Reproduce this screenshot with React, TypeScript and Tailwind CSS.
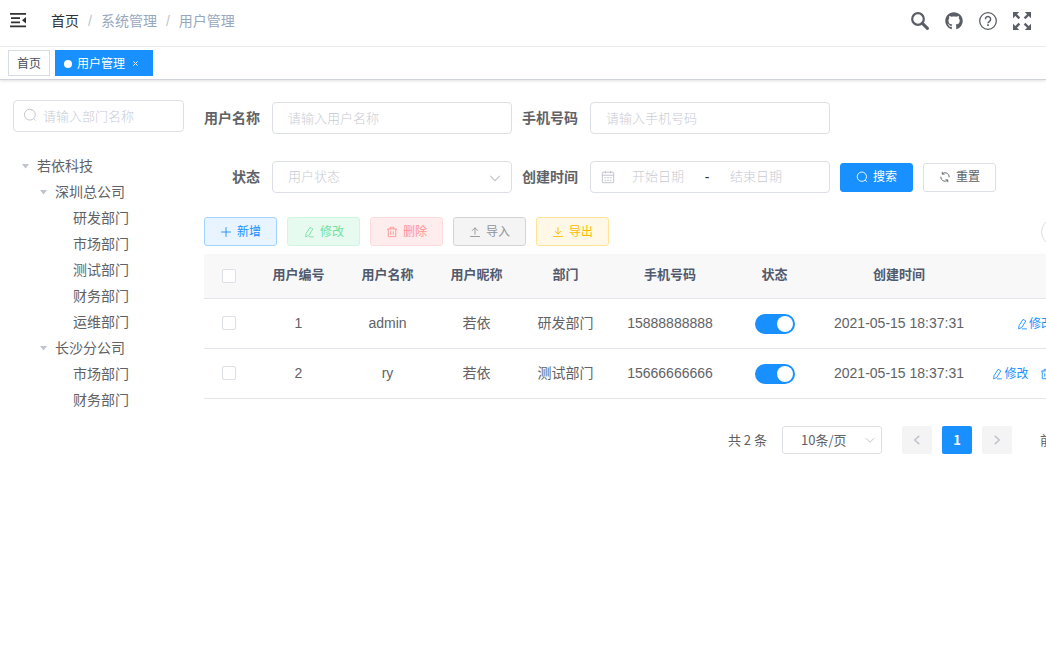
import type { ReactNode } from "react";
import { FaGithub } from "react-icons/fa";

type IconName =
  | "search" | "plus" | "edit" | "delete" | "upload" | "download"
  | "refresh" | "date" | "down" | "left" | "right";

const shapes: Record<IconName, ReactNode> = {
  search: <><circle cx="7.8" cy="7.6" r="6.2" /><path d="M12.2 12l2.2 2.4" /></>,
  plus: <path d="M8 1.5v13M1.5 8h13" />,
  edit: <><path d="M9.5 1.8l3.6 2.1-5.4 8.8-4.2 1.7.6-4.3z" /><path d="M8 14.5h6.5" /></>,
  delete: <><path d="M1.5 4h13M5.5 4V1.8h5V4M3 4v10.2h10V4M6.3 7v4.5M9.7 7v4.5" /></>,
  upload: <path d="M8 11.5V2.4M4 6.4l4-4 4 4M1.5 14h13" />,
  download: <path d="M8 1.5v9.3M4 6.8l4 4 4-4M1.5 14h13" />,
  refresh: <><path d="M2.4 7.6a5.7 5.7 0 0 0 9.2 4.9M13.6 8.4a5.7 5.7 0 0 0-9.2-4.9" /><path d="M4.3 1v3.2h3.2M11.7 15v-3.2H8.5" /></>,
  date: <><rect x="1.5" y="2.5" width="13" height="12" rx="0.8" /><path d="M1.5 6h13M5 1v3M11 1v3M4 8.8h2M7 8.8h2M10 8.8h2M4 11.8h2M7 11.8h2M10 11.8h2" /></>,
  down: <path d="M2.5 5.5L8 11l5.5-5.5" />,
  left: <path d="M11 2.5L5 8l6 5.5" />,
  right: <path d="M5 2.5L11 8l-6 5.5" />,
};

function Icon({ name, className = "size-3", width = 1.2 }: { name: IconName; className?: string; width?: number }) {
  return (
    <svg viewBox="0 0 16 16" fill="none" stroke="currentColor" strokeWidth={width} className={`shrink-0 ${className}`} aria-hidden="true">
      {shapes[name]}
    </svg>
  );
}

const field =
  "h-8 w-full rounded border border-[#dcdfe6] bg-white text-[13px] text-[#606266] outline-none placeholder:text-[#c8ccd4] placeholder:font-light";
const button = "flex h-[29px] w-[73px] items-center justify-center gap-[5px] rounded-[3px] border text-xs";

function FormItem({ label, id, children }: { label: string; id: string; children: ReactNode }) {
  return (
    <div className="flex items-center">
      <label htmlFor={id} className="w-[68px] pr-3 text-right text-sm font-bold whitespace-nowrap text-[#606266]">
        {label}
      </label>
      <div className="relative w-60">{children}</div>
    </div>
  );
}

function Header() {
  return (
    <header className="flex h-[47px] items-center justify-between border-b border-[#eef0f3] pr-[15px] pb-1 pl-[9px]">
      <div className="flex items-center gap-6">
        <button type="button" aria-label="折叠菜单" className="size-[18px] text-[#303133]">
          <svg viewBox="0 0 18 18" fill="currentColor" className="size-[18px]">
            <path d="M1 1h16v1.8H1zM2 5.2h9v1.8H2zM2 9.4h9v1.8H2zM1 13.4h16v1.8H1zM17 5v6.4L13 8.2z" />
          </svg>
        </button>
        <nav className="flex items-center gap-[9px] text-sm text-[#97a8be]">
          <a href="#" className="text-[#303133]">首页</a>
          <span className="text-[#c0c4cc]">/</span>
          <span>系统管理</span>
          <span className="text-[#c0c4cc]">/</span>
          <span>用户管理</span>
        </nav>
      </div>
      <div className="flex items-center gap-4 text-[#5a5e66]">
        <button type="button" aria-label="搜索">
          <svg viewBox="0 0 18 18" fill="none" stroke="currentColor" className="size-[18px]">
            <circle cx="7" cy="7" r="5.8" strokeWidth="2.2" />
            <path d="M11.4 11.4l5 5" strokeWidth="3" strokeLinecap="round" />
          </svg>
        </button>
        <a href="#" aria-label="源码"><FaGithub className="size-[18px]" /></a>
        <a href="#" aria-label="文档">
          <svg viewBox="0 0 18 18" fill="none" stroke="currentColor" className="size-[18px]">
            <circle cx="9" cy="9" r="8.3" strokeWidth="1.3" />
            <path d="M6.4 7.2a2.6 2.6 0 1 1 4.1 2.1c-.9.6-1.5 1-1.5 2" strokeWidth="1.5" />
            <path d="M9 12.3v1.6" strokeWidth="1.7" />
          </svg>
        </a>
        <button type="button" aria-label="全屏">
          <svg viewBox="0 0 18 18" fill="currentColor" stroke="currentColor" className="size-[18px]">
            <g strokeWidth="0">
              <path d="M0 0h6.2L0 6.2zM18 0v6.2L11.8 0zM0 18v-6.2L6.2 18zM18 18h-6.2l6.2-6.2z" />
            </g>
            <path d="M2 2l4.4 4.4M16 2l-4.4 4.4M2 16l4.4-4.4M16 16l-4.4-4.4" strokeWidth="2.4" />
          </svg>
        </button>
      </div>
    </header>
  );
}

function TagsBar() {
  return (
    <div className="flex h-[33px] items-start gap-[5px] border-b border-[#d0d3da] px-2 pt-[3px] text-xs shadow-[0_1px_3px_0_rgba(0,0,0,0.12)]">
      <a href="#" className="flex h-[26px] items-center border border-[#d8dce5] px-2 pt-px text-[#495060]">首页</a>
      <a href="#" className="flex h-[26px] w-[98px] items-center border border-[#1890ff] bg-[#1890ff] px-2 pt-px text-white">
        <span className="mr-[5px] size-2 rounded-full bg-white" />
        用户管理
        <svg viewBox="0 0 8 8" className="ml-[7px] size-[7px]" fill="none" stroke="currentColor" aria-hidden="true">
          <path d="M1.5 1.5l5 5M6.5 1.5l-5 5" />
        </svg>
      </a>
    </div>
  );
}

const tree = [
  { name: "若依科技", level: 0, open: true },
  { name: "深圳总公司", level: 1, open: true },
  { name: "研发部门", level: 2 },
  { name: "市场部门", level: 2 },
  { name: "测试部门", level: 2 },
  { name: "财务部门", level: 2 },
  { name: "运维部门", level: 2 },
  { name: "长沙分公司", level: 1, open: true },
  { name: "市场部门", level: 2 },
  { name: "财务部门", level: 2 },
];
const indents = ["pl-0", "pl-[18px]", "pl-9"];

function DeptPanel() {
  return (
    <aside className="w-[171px] shrink-0 pt-5">
      <div className="relative">
        <input aria-label="部门名称" placeholder="请输入部门名称" className={`${field} pr-3 pl-[29px]`} />
        <Icon name="search" width={1.1} className="absolute top-2 left-[10px] size-[14px] text-[#c0c4cc]" />
      </div>
      <ul className="mt-[21px] text-sm text-[#606266]">
        {tree.map((node, i) => (
          <li key={i} className={`flex h-[26px] items-center ${indents[node.level]}`}>
            <span className="flex w-6 justify-center">
              {node.open && (
                <svg viewBox="0 0 7 5" className="h-[5px] w-[7px] fill-[#c0c4cc]" aria-hidden="true"><path d="M0 0h7L3.5 4.5z" /></svg>
              )}
            </span>
            {node.name}
          </li>
        ))}
      </ul>
    </aside>
  );
}

function SearchForm() {
  return (
    <form className="flex flex-wrap items-center gap-x-[10px] gap-y-[27px]">
      <FormItem label="用户名称" id="user">
        <input id="user" placeholder="请输入用户名称" className={`${field} px-[15px]`} />
      </FormItem>
      <FormItem label="手机号码" id="phone">
        <input id="phone" placeholder="请输入手机号码" className={`${field} px-[15px]`} />
      </FormItem>
      <FormItem label="状态" id="status">
        <select id="status" className={`${field} appearance-none px-[15px] font-light text-[#c8ccd4]`}>
          <option>用户状态</option>
        </select>
        <Icon name="down" width={1.3} className="pointer-events-none absolute top-[10px] right-[10px] size-[14px] text-[#c0c4cc]" />
      </FormItem>
      <FormItem label="创建时间" id="start">
        <div className={`${field} flex items-center px-[10px]`}>
          <Icon name="date" width={1.1} className="size-[14px] text-[#c0c4cc]" />
          <input id="start" placeholder="开始日期" className="w-[86px] text-center outline-none placeholder:font-light placeholder:text-[#c8ccd4]" />
          <span className="w-3 text-center text-sm text-[#303133]">-</span>
          <input aria-label="结束日期" placeholder="结束日期" className="w-[86px] text-center outline-none placeholder:font-light placeholder:text-[#c8ccd4]" />
        </div>
      </FormItem>
      <div className="flex gap-[10px]">
        <button type="button" className={`${button} border-[#1890ff] bg-[#1890ff] text-white`}><Icon name="search" />搜索</button>
        <button type="button" className={`${button} border-[#dcdfe6] bg-white text-[#606266]`}><Icon name="refresh" />重置</button>
      </div>
    </form>
  );
}

const actions: { icon: IconName; label: string; tone: string }[] = [
  { icon: "plus", label: "新增", tone: "border-[#a3d3ff] bg-[#e8f4ff] text-[#1890ff]" },
  { icon: "edit", label: "修改", tone: "border-[#d0f5e0] bg-[#e7faf0] text-[#71e2a3]" },
  { icon: "delete", label: "删除", tone: "border-[#ffdbdb] bg-[#ffeded] text-[#ff9292]" },
  { icon: "upload", label: "导入", tone: "border-[#d3d4d6] bg-[#f4f4f5] text-[#909399]" },
  { icon: "download", label: "导出", tone: "border-[#ffe399] bg-[#fff8e6] text-[#ffba00]" },
];

function Toolbar() {
  return (
    <div className="mt-6 flex items-center justify-between">
      <div className="flex gap-[10px]">
        {actions.map((a) => (
          <button key={a.label} type="button" className={`${button} ${a.tone}`}><Icon name={a.icon} />{a.label}</button>
        ))}
      </div>
      <div className="flex gap-[7px]">
        {(["search", "refresh", "date"] as IconName[]).map((name) => (
          <button key={name} type="button" aria-label={name} className="flex size-7 items-center justify-center rounded-full border border-[#dcdfe6] text-[#606266]">
            <Icon name={name} />
          </button>
        ))}
      </div>
    </div>
  );
}

const users = [
  { id: 1, name: "admin", nick: "若依", dept: "研发部门", phone: "15888888888", ops: ["edit", "refresh"] },
  { id: 2, name: "ry", nick: "若依", dept: "测试部门", phone: "15666666666", ops: ["edit", "delete", "refresh"] },
];
const opLabels: Record<string, string> = { edit: "修改", delete: "删除", refresh: "重置" };

function Check({ label }: { label: string }) {
  return (
    <input type="checkbox" aria-label={label} className="mx-auto block size-[14px] appearance-none rounded-[2px] border border-[#dcdfe6] bg-white checked:bg-[#1890ff]" />
  );
}

function UserTable() {
  return (
    <table className="mt-2 w-full table-fixed border-collapse text-center text-sm text-[#606266]">
      <colgroup>
        <col className="w-[50px]" />
        <col /><col /><col /><col />
        <col className="w-[120px]" />
        <col />
        <col className="w-40" />
        <col className="w-40" />
      </colgroup>
      <thead>
        <tr className="h-11 border-b border-[#e3e7ed] bg-[#f8f8f9] text-[13px] text-[#515a6e]">
          <th><Check label="全选" /></th>
          <th>用户编号</th><th>用户名称</th><th>用户昵称</th><th>部门</th>
          <th>手机号码</th><th>状态</th><th>创建时间</th><th className="pl-1">操作</th>
        </tr>
      </thead>
      <tbody>
        {users.map((u) => (
          <tr key={u.id} className="h-[50px] border-b border-[#e3e7ed]">
            <td><Check label={u.name} /></td>
            <td>{u.id}</td><td>{u.name}</td><td>{u.nick}</td><td>{u.dept}</td><td>{u.phone}</td>
            <td className="pt-px">
              <input
                type="checkbox" role="switch" defaultChecked aria-label={`${u.name} 状态`}
                className="mx-auto block h-5 w-10 appearance-none rounded-full bg-[#c0c4cc] p-[2px] before:block before:size-4 before:rounded-full before:bg-white checked:bg-[#1890ff] checked:before:ml-5"
              />
            </td>
            <td>2021-05-15 18:37:31</td>
            <td>
              <div className="flex justify-center gap-3 pt-px text-xs text-[#1890ff]">
                {u.ops.map((op) => (
                  <button key={op} type="button" className="flex items-center gap-px whitespace-nowrap">
                    <Icon name={op as IconName} />{opLabels[op]}
                  </button>
                ))}
              </div>
            </td>
          </tr>
        ))}
      </tbody>
    </table>
  );
}

function Pagination() {
  const page = "flex h-7 w-[30px] items-center justify-center rounded-[2px]";
  return (
    <div className="mt-[27px] flex items-center justify-end text-[13px] text-[#606266] font-['Noto_Sans_CJK_SC',sans-serif]">
      <span className="mr-[15px]">共 2 条</span>
      <div className="relative mr-5 w-[100px]">
        <select aria-label="每页条数" className="h-7 w-full appearance-none rounded-[3px] border border-[#dcdfe6] bg-white pl-[18px] outline-none">
          <option>10条/页</option>
        </select>
        <Icon name="down" width={1.3} className="pointer-events-none absolute top-2 right-[6px] size-3 text-[#c0c4cc]" />
      </div>
      <div className="flex gap-[10px]">
        <button type="button" aria-label="上一页" className={`${page} bg-[#f4f4f5] text-[#c0c4cc]`}><Icon name="left" width={2} /></button>
        <button type="button" className={`${page} bg-[#1890ff] font-bold text-white`}>1</button>
        <button type="button" aria-label="下一页" className={`${page} bg-[#f4f4f5] text-[#c0c4cc]`}><Icon name="right" width={2} /></button>
      </div>
      <label className="ml-7 flex items-center gap-[6px] whitespace-nowrap">
        前往
        <input defaultValue="1" className="h-7 w-12 rounded-[3px] border border-[#dcdfe6] text-center" />
        页
      </label>
    </div>
  );
}

export default function App() {
  return (
    <div className="min-h-screen overflow-x-hidden bg-white font-['Liberation_Sans','Noto_Sans_CJK_SC',sans-serif]">
      <Header />
      <TagsBar />
      <div className="flex gap-5 px-[13px]">
        <DeptPanel />
        <main className="min-w-[935px] flex-1 pt-[22px]">
          <SearchForm />
          <Toolbar />
          <UserTable />
          <Pagination />
        </main>
      </div>
    </div>
  );
}
